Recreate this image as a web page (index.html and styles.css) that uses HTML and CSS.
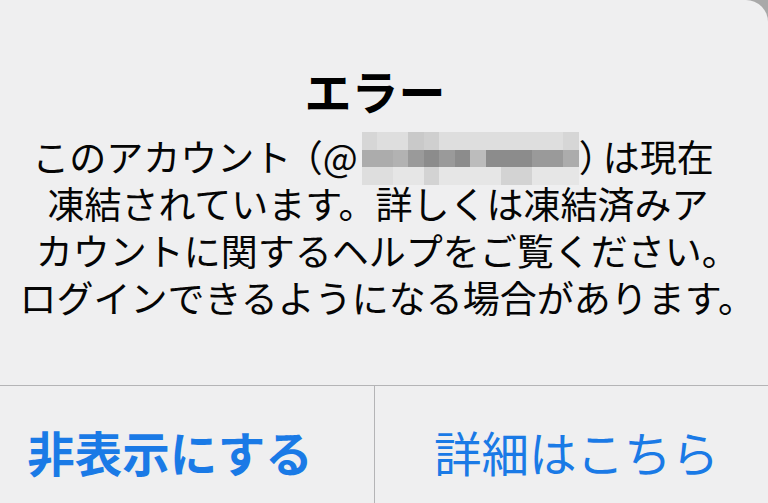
FILE: index.html
```html
<!DOCTYPE html>
<html lang="ja">
<head>
<meta charset="utf-8">
<link rel="stylesheet" href="styles.css">
</head>
<body>
<div class="dialog">
  <div class="content">
    <div class="title">エラー</div>
    <div class="message">
      <div class="line line-first">このアカウント<span class="open">（</span>@<span class="mosaic"><i class="a"></i><i class="b"></i><i class="b"></i><i class="c"></i><i class="c2"></i><i class="b"></i><i class="b"></i><i class="b"></i><i class="b"></i><i class="b"></i><i class="b"></i><i class="b"></i><i class="b"></i><i class="a"></i><i class="m1"></i><i class="m1"></i><i class="m2"></i><i class="m3"></i><i class="m4"></i><i class="m3"></i><i class="m4"></i><i class="m5"></i><i class="m4"></i><i class="m4"></i><i class="m4"></i><i class="m3"></i><i class="m3"></i><i class="m1"></i><i class="d"></i><i class="d"></i><i class="e"></i><i class="e"></i><i class="f"></i><i class="e"></i><i class="e"></i><i class="e"></i><i class="e"></i><i class="f"></i><i class="f"></i><i class="e"></i><i class="e"></i><i class="e"></i></span><span class="close">）</span>は現在</div>
      <div class="line">凍結されています。詳しくは凍結済みア</div>
      <div class="line">カウントに関するヘルプをご覧ください<span class="trim">。</span></div>
      <div class="line">ログインできるようになる場合があります<span class="trim">。</span></div>
    </div>
  </div>
  <div class="actions">
    <div class="btn btn-left">非表示にする</div>
    <div class="btn btn-right">詳細はこちら</div>
  </div>
</div>
</body>
</html>
```
FILE: styles.css
```css
html, body {
  margin: 0;
  padding: 0;
}
body {
  width: 768px;
  height: 503px;
  overflow: hidden;
  background: #a9a9a9;
  font-family: "Noto Sans CJK JP", "Noto Sans", sans-serif;
}
.dialog {
  width: 768px;
  height: 503px;
  background: #efeff0;
  border-top-right-radius: 22px;
  display: flex;
  flex-direction: column;
}
.content {
  width: 768px;
  text-align: center;
  padding-top: 62px;
  height: 386px;
  box-sizing: border-box;
  border-bottom: 1px solid #b4b4b6;
  flex: none;
}
.title {
  font-size: 47px;
  font-weight: 700;
  line-height: 56px;
  color: #000;
  padding-right: 18px;
}
.message {
  margin-top: 15px;
  font-size: 37px;
  line-height: 47px;
  color: #050505;
  padding-right: 12px;
}
.line {
  white-space: nowrap;
}
.line-first {
  padding-right: 10px;
}
.trim {
  margin-right: -0.5em;
}
.open {
  margin-left: -0.15em;
}
.close {
  margin-right: -0.35em;
}
.mosaic {
  display: inline-grid;
  grid-template-columns: repeat(14, 1fr);
  grid-template-rows: 18px 17px 18px;
  width: 217px;
  height: 53px;
  vertical-align: top;
  margin: -1px 0 -5px 4px;
}
.mosaic i { display: block; }
.mosaic .a { background: #d6d6d6; }
.mosaic .b { background: #dedede; }
.mosaic .c { background: #c9c9c9; }
.mosaic .c2 { background: #cfcfcf; }
.mosaic .m1 { background: #acacac; }
.mosaic .m2 { background: #b2b2b2; }
.mosaic .m3 { background: #9a9a9a; }
.mosaic .m4 { background: #8c8c8c; }
.mosaic .m5 { background: #bcbcbc; }
.mosaic .d { background: #dedede; }
.mosaic .e { background: #e6e6e6; }
.mosaic .f { background: #d3d3d3; }
.actions {
  display: grid;
  grid-template-columns: 375px 1fr;
  flex: 1;
}
.btn {
  font-size: 47.5px;
  line-height: 56px;
  color: #1a7ae6;
  padding-top: 38px;
  text-align: center;
  white-space: nowrap;
}
.btn-left {
  font-weight: 700;
  padding-right: 34px;
  border-right: 1px solid #b4b4b6;
}
.btn-right {
  padding-left: 10px;
}
```
